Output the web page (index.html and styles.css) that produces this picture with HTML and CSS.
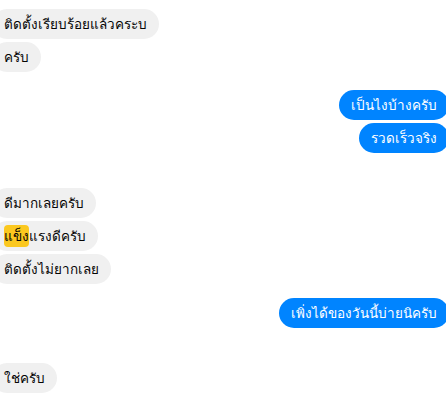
FILE: index.html
```html
<!DOCTYPE html>
<html lang="th">
<head>
    <meta charset="UTF-8">
    <meta name="viewport" content="width=device-width, initial-scale=1.0">
    <title>Chat</title>
    <link rel="stylesheet" href="styles.css">
</head>
<body>
    <div class="chat">
        <div class="group">
            <div class="msg in">ติดตั้งเรียบร้อยแล้วคระบ</div>
            <div class="msg in">ครับ</div>
        </div>
        <div class="group out-group">
            <div class="msg out">เป็นไงบ้างครับ</div>
            <div class="msg out">รวดเร็วจริง</div>
        </div>
        <div class="group gap-big">
            <div class="msg in">ดีมากเลยครับ</div>
            <div class="msg in"><span class="hl">แข็ง</span>แรงดีครับ</div>
            <div class="msg in">ติดตั้งไม่ยากเลย</div>
        </div>
        <div class="group out-group tight">
            <div class="msg out">เพิ่งได้ของวันนี้บ่ายนิครับ</div>
        </div>
        <div class="group gap-big">
            <div class="msg in">ใช่ครับ</div>
        </div>
    </div>
</body>
</html>
```

FILE: styles.css
```css
body {
    margin: 0;
    background: #fff;
    font-family: Tahoma, "Noto Sans", "DejaVu Sans", sans-serif;
    font-size: 13.5px;
    color: #050505;
}

.chat {
    display: flex;
    flex-direction: column;
    padding-top: 9px;
    overflow: hidden;
}

.group {
    display: flex;
    flex-direction: column;
    align-items: flex-start;
    gap: 3px;
    margin-bottom: 18px;
}

.group.out-group {
    align-items: flex-end;
}

.group.gap-big {
    margin-top: 17px;
}

.group.tight {
    margin-top: -4px;
}

.msg {
    line-height: 18px;
    padding: 6px 12px;
    border-radius: 15px;
}

.msg.in {
    background: #f0f0f0;
    margin-left: -8px;
}

.msg.out {
    background: #0084ff;
    color: #fff;
    margin-right: -3px;
}

.hl {
    background: #fbc81f;
    border-radius: 4px;
    padding: 2px 0;
}
```
